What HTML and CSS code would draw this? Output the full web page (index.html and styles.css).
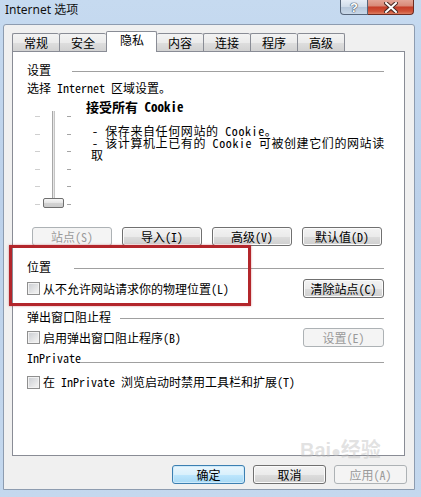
FILE: index.html
```html
<!DOCTYPE html>
<html lang="zh-CN">
<head>
  <meta charset="UTF-8" />
  <meta name="viewport" content="width=device-width, initial-scale=1.0"/>
  <title>Internet 选项</title>
  <link rel="stylesheet" href="styles.css">
</head>
<body>
  <div class="window">
    <div class="titlebar">
      <span class="title">Internet 选项</span>
      <div class="caption">
        <span class="cap-btn help">?</span>
        <span class="cap-btn close">
          <svg width="14" height="11" viewBox="0 0 14 11">
            <path d="M2 1 L12 10 M12 1 L2 10" stroke="#4a2a24" stroke-width="4" stroke-linecap="square"/>
            <path d="M2 1 L12 10 M12 1 L2 10" stroke="#ffffff" stroke-width="2" stroke-linecap="square"/>
          </svg>
        </span>
      </div>
    </div>

    <div class="client">
      <div class="tabs">
        <span class="tab">常规</span>
        <span class="tab">安全</span>
        <span class="tab active">隐私</span>
        <span class="tab">内容</span>
        <span class="tab">连接</span>
        <span class="tab">程序</span>
        <span class="tab last">高级</span>
      </div>

      <div class="panel">
        <div class="group-head g-settings"><span>设置</span><span class="rule"></span></div>
        <p class="intro">选择 Internet 区域设置。</p>

        <div class="privacy">
          <div class="slider">
            <div class="slider-box">
              <div class="ticks ticks-left">
                <i></i><i></i><i></i><i></i><i></i><i></i>
              </div>
              <div class="track"></div>
              <div class="ticks ticks-right">
                <i></i><i></i><i></i><i></i><i></i><i></i>
              </div>
              <div class="thumb"></div>
            </div>
          </div>
          <div class="level">
            <div class="level-title">接受所有 Cookie</div>
            <div class="level-desc">
              <p>- 保存来自任何网站的 Cookie。</p>
              <p>- 该计算机上已有的 Cookie 可被创建它们的网站读<br><span class="wrap">取</span></p>
            </div>
          </div>
        </div>

        <div class="btn-row">
          <button class="btn" disabled>站点(S)</button>
          <button class="btn">导入(I)</button>
          <button class="btn">高级(V)</button>
          <button class="btn">默认值(D)</button>
        </div>

        <div class="group-head g-location"><span>位置</span><span class="rule"></span></div>
        <div class="opt-row">
          <label class="check"><span class="box"></span>从不允许网站请求你的物理位置(L)</label>
          <button class="btn">清除站点(C)</button>
        </div>

        <div class="group-head g-popup"><span>弹出窗口阻止程</span><span class="rule"></span></div>
        <div class="opt-row">
          <label class="check"><span class="box"></span>启用弹出窗口阻止程序(B)</label>
          <button class="btn" disabled>设置(E)</button>
        </div>

        <div class="group-head g-inprivate"><span>InPrivate</span><span class="rule"></span></div>
        <div class="opt-row short">
          <label class="check"><span class="box"></span>在 InPrivate 浏览启动时禁用工具栏和扩展(T)</label>
        </div>
      </div>

      <div class="dialog-buttons">
        <button class="btn wide default">确定</button>
        <button class="btn wide">取消</button>
        <button class="btn wide" disabled>应用(A)</button>
      </div>

      <div class="annotation"></div>
      <div class="watermark">Bai<span class="paw">●</span>经验</div>
    </div>
  </div>
</body>
</html>
```

FILE: styles.css
```css
:root {
  --client: #f0f0f0;
  --tab-border: #898c95;
  --btn-border: #707070;
  --rule: #a0a0a0;
  --mark: #b3262b;
}

body {
  margin: 0;
  font-family: "Noto Sans Mono CJK SC", "Noto Sans CJK SC", monospace;
  font-size: 12px;
  color: #000;
}

p {
  margin: 0;
}

.window {
  width: 421px;
  height: 497px;
  overflow: hidden;
  background: linear-gradient(#c6daf0, #bcd1ea 40%, #c4d8ee);
}

/* title bar */
.titlebar {
  height: 24px;
  display: flex;
  justify-content: space-between;
  align-items: flex-start;
}

.title {
  font-family: "Noto Sans", "Noto Sans CJK SC", sans-serif;
  font-size: 12px;
  line-height: 20px;
  padding-left: 5px;
  color: #111;
}

.caption {
  display: flex;
  margin-right: 7px;
}

.cap-btn {
  height: 15px;
  box-sizing: border-box;
  display: flex;
  align-items: center;
  justify-content: center;
  border: 1px solid #56657a;
  border-top: none;
}

.help {
  width: 28px;
  border-radius: 0 0 0 4px;
  background: linear-gradient(#e6edf6, #cfdbe9 50%, #b6c7db 52%, #c9d8e9);
  color: #fff;
  font-family: "Liberation Sans", sans-serif;
  font-weight: bold;
  font-size: 13px;
  line-height: 13px;
  text-shadow: 0 0 1px #3c4a5c, 0 0 1px #3c4a5c, 0 0 1px #3c4a5c;
}

.close {
  width: 46px;
  border-color: #6e2c22;
  border-left: none;
  border-radius: 0 0 4px 0;
  background: linear-gradient(#e3a597, #d98b7a 40%, #c63e29 52%, #cf5238 80%, #dc7e62);
}

/* client area */
.client {
  position: relative;
  margin-left: 3px;
  width: 412px;
  height: 466px;
  box-sizing: border-box;
  padding: 6px 9px 0 8px;
  background: var(--client);
  border: 1px solid #8d9cb0;
  border-radius: 3px 3px 0 0;
}

.tabs {
  display: flex;
  align-items: flex-end;
  height: 20px;
}

.tab {
  height: 18px;
  box-sizing: border-box;
  padding: 0 11px;
  line-height: 17px;
  border: 1px solid var(--tab-border);
  border-bottom: none;
  border-right: none;
  border-radius: 2px 2px 0 0;
  background: linear-gradient(#f3f3f3, #ebebeb 50%, #dedede 51%, #d2d2d2);
}

.tab.last {
  border-right: 1px solid var(--tab-border);
}

.tab.active {
  position: relative;
  z-index: 1;
  height: 21px;
  margin-bottom: -1px;
  padding: 0 12px 0 13px;
  line-height: 16px;
  background: #fff;
  border-right: 1px solid var(--tab-border);
}

.tab.active + .tab {
  border-left: none;
}

.panel {
  height: 405px;
  box-sizing: border-box;
  padding: 11px 20px 0 14px;
  background: #fff;
  border: 1px solid var(--tab-border);
}

/* group headings */
.group-head {
  display: flex;
  align-items: center;
  height: 14px;
  line-height: 14px;
}

.rule {
  flex: 1;
  height: 0;
  margin-top: 2px;
  border-top: 1px solid var(--rule);
}

.g-settings .rule { margin-left: 21px; }
.g-location .rule { margin-left: 23px; }
.g-popup .rule { margin-left: 9px; }
.g-inprivate .rule { margin-left: -1px; margin-top: 8px; }

.g-location { margin-top: 14px; }
.g-popup { margin-top: 12px; }
.g-inprivate { margin-top: 4px; }

.intro {
  margin-top: 4px;
  line-height: 14px;
}

/* privacy level */
.privacy {
  display: flex;
  height: 110px;
  margin-top: 5px;
}

.slider {
  width: 59px;
  flex: none;
}

.slider-box {
  position: relative;
  display: flex;
  height: 97px;
  margin: 11px 0 0 6px;
}

.ticks {
  display: flex;
  flex-direction: column;
  justify-content: space-between;
  padding: 5px 0 3px;
}

.ticks i {
  display: block;
  height: 1px;
}

.ticks-left {
  width: 5px;
  margin-left: 2px;
}

.ticks-left i {
  background: #cfcfcf;
}

.ticks-right {
  width: 4px;
  margin-left: 12px;
}

.ticks-right i {
  background: #a4a4a4;
}

.track {
  width: 3px;
  height: 92px;
  margin-left: 12px;
  box-sizing: border-box;
  border-left: 1px solid #a8a8a8;
  border-right: 1px solid #c4c4c4;
  background: #e6e6e6;
}

.thumb {
  position: absolute;
  left: 10px;
  top: 87px;
  width: 21px;
  height: 10px;
  box-sizing: border-box;
  border: 1px solid #6f6f6f;
  border-radius: 2px;
  background: linear-gradient(#f6f6f6, #e4e4e4 50%, #d3d3d3 52%, #cbcbcb);
}

.level {
  flex: 1;
  min-width: 0;
}

.level-title {
  font-weight: bold;
  font-size: 13px;
  line-height: 14px;
}

.level-desc {
  margin: 11px 0 0 6px;
  font-size: 12px;
  letter-spacing: 0.6px;
  line-height: 12px;
  white-space: nowrap;
}

.level-desc .wrap {
  margin-left: -1px;
}

/* buttons */
.btn {
  width: 80px;
  height: 19px;
  box-sizing: border-box;
  padding: 0;
  font-family: inherit;
  font-size: 12px;
  line-height: 16px;
  color: #000;
  text-align: center;
  border: 1px solid var(--btn-border);
  border-radius: 3px;
  background: linear-gradient(#f3f3f3, #ebebeb 50%, #dddddd 51%, #cfcfcf);
  box-shadow: inset 0 0 0 1px #fbfbfb;
}

.btn:disabled {
  color: #9a9a9a;
  border-color: #adb2b5;
  background: #f4f4f4;
  box-shadow: none;
}

.btn.default {
  border-color: #3c7fb1;
  background: linear-gradient(#eaf6fd, #d9f0fc 50%, #bee6fd 51%, #a7d9f5);
  box-shadow: inset 0 0 0 1px #cdeafb;
}

.btn.wide {
  width: 73px;
}

.btn-row {
  display: flex;
  gap: 10px;
  margin-top: 17px;
  padding-left: 5px;
}

.opt-row {
  display: flex;
  align-items: center;
  justify-content: space-between;
  height: 19px;
  margin-top: 5px;
}

.g-popup + .opt-row {
  margin-top: 4px;
}

.opt-row.short {
  height: 14px;
  margin-top: 10px;
}

.opt-row .btn {
  width: 81px;
}

.check {
  display: flex;
  align-items: center;
  gap: 3px;
  line-height: 14px;
}

.box {
  width: 13px;
  height: 13px;
  box-sizing: border-box;
  border: 1px solid #8f8f8f;
  box-shadow: inset 0 0 0 1px #f2f2f2;
  background: linear-gradient(135deg, #c9ccd1, #eeeeee 80%);
}

.dialog-buttons {
  display: flex;
  justify-content: flex-end;
  gap: 8px;
  margin: 9px -2px 0 0;
}

/* annotation drawn over the screenshot */
.annotation {
  position: absolute;
  left: 5px;
  top: 220px;
  width: 242px;
  height: 61px;
  box-sizing: border-box;
  border: 3px solid var(--mark);
  box-shadow: 0 0 2px rgba(179, 38, 43, 0.5);
}

.watermark {
  position: absolute;
  left: 296px;
  top: 413px;
  line-height: 24px;
  font-family: "Liberation Sans", "Noto Sans CJK SC", sans-serif;
  font-size: 20px;
  font-weight: bold;
  color: rgba(190, 190, 190, 0.45);
}

.paw {
  font-size: 16px;
}
```
